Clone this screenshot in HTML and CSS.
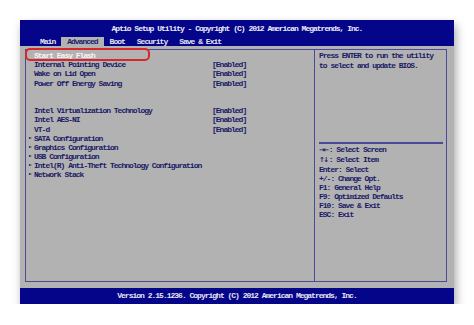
FILE: index.html
```html
<!DOCTYPE html>
<html lang="en">
<head>
    <meta charset="UTF-8">
    <title>Aptio Setup Utility</title>
    <link rel="stylesheet" href="styles.css">
</head>
<body>

    <div class="screen">
        <div class="title">Aptio Setup Utility - Copyright (C) 2012 American Megatrends, Inc.</div>
        <div class="tabs">
            <span class="tab">Main</span>
            <span class="tab active">Advanced</span>
            <span class="tab">Boot</span>
            <span class="tab">Security</span>
            <span class="tab">Save &amp; Exit</span>
        </div>

        <div class="main">
            <div class="frame">
                <div class="options">
                    <div class="row selected"><span>Start Easy Flash</span></div>
                    <div class="row"><span>Internal Pointing Device</span><span>[Enabled]</span></div>
                    <div class="row"><span>Wake on Lid Open</span><span>[Enabled]</span></div>
                    <div class="row"><span>Power Off Energy Saving</span><span>[Enabled]</span></div>
                    <div class="row"></div>
                    <div class="row"></div>
                    <div class="row"><span>Intel Virtualization Technology</span><span>[Enabled]</span></div>
                    <div class="row"><span>Intel AES-NI</span><span>[Enabled]</span></div>
                    <div class="row"><span>VT-d</span><span>[Enabled]</span></div>
                    <div class="row sub"><span>SATA Configuration</span></div>
                    <div class="row sub"><span>Graphics Configuration</span></div>
                    <div class="row sub"><span>USB Configuration</span></div>
                    <div class="row sub"><span>Intel(R) Anti-Theft Technology Configuration</span></div>
                    <div class="row sub"><span>Network Stack</span></div>

                    <div class="marker"></div>
                </div>

                <div class="side">
                    <div class="help">
                        Press ENTER to run the utility<br>
                        to select and update BIOS.
                    </div>
                    <div class="keys">
                        <div><span class="arrows">→←</span>: Select Screen</div>
                        <div><span class="arrows">↑↓</span>: Select Item</div>
                        <div>Enter: Select</div>
                        <div>+/-: Change Opt.</div>
                        <div>F1: General Help</div>
                        <div>F9: Optimized Defaults</div>
                        <div>F10: Save &amp; Exit</div>
                        <div>ESC: Exit</div>
                    </div>
                </div>
            </div>
        </div>

        <div class="footer">Version 2.15.1236. Copyright (C) 2012 American Megatrends, Inc.</div>
    </div>

</body>
</html>
```

FILE: styles.css
```css
body {
    margin: 0;
    background: #fff;
    font-family: "Liberation Mono", "DejaVu Sans Mono", monospace;
    font-size: 8px;
    font-weight: bold;
    letter-spacing: -1px;
}
.screen {
    width: 434px;
    margin: 20px 0 0 20px;
    box-shadow: 2px 5px 9px rgba(0,0,0,0.35);
}
.title {
    height: 17px;
    line-height: 17px;
    background-color: #05058a;
    color: #ececf6;
    text-align: center;
}
.tabs {
    height: 9px;
    line-height: 9px;
    background-color: #05058a;
    color: #e4e4f0;
    display: flex;
    padding-left: 14px;
}
.tab {
    padding: 0 6px;
}
.tab.active {
    background-color: #b2b2b2;
    color: #1c1c6c;
}
.main {
    background-color: #b2b2b2;
    color: #1a1a66;
    padding: 3px 7px 6px 5px;
}
.frame {
    height: 231px;
    border: 1px solid #4a4a98;
    display: flex;
}
.options {
    position: relative;
    width: 280px;
    padding: 1px 0 0 8px;
    border-right: 1px solid #4a4a98;
}
.row {
    height: 9.2px;
    line-height: 9.2px;
    display: grid;
    grid-template-columns: 178px auto;
    white-space: nowrap;
}
.row.selected {
    color: #f6f6f6;
}
.row.sub {
    position: relative;
}
.row.sub::before {
    content: "";
    position: absolute;
    left: -5px;
    top: 3px;
    border-left: 3px solid #1a1a66;
    border-top: 1.5px solid transparent;
    border-bottom: 1.5px solid transparent;
}
.marker {
    position: absolute;
    left: -1px;
    top: -2px;
    width: 121px;
    height: 9px;
    border: 2px solid #d8262a;
    border-radius: 5px;
}
.side {
    flex: 1;
    display: flex;
    flex-direction: column;
    padding: 1px 3px 0 4px;
}
.help {
    height: 91px;
    line-height: 9.5px;
    border-bottom: 2px solid #4a4a98;
}
.keys {
    padding-top: 1px;
    line-height: 9px;
}
.arrows {
    font-family: "DejaVu Sans", sans-serif;
    font-size: 7px;
    letter-spacing: -1.5px;
    margin-right: 1px;
}
.footer {
    height: 16px;
    line-height: 16px;
    background-color: #05058a;
    color: #e4e4f0;
    text-align: center;
}
```
